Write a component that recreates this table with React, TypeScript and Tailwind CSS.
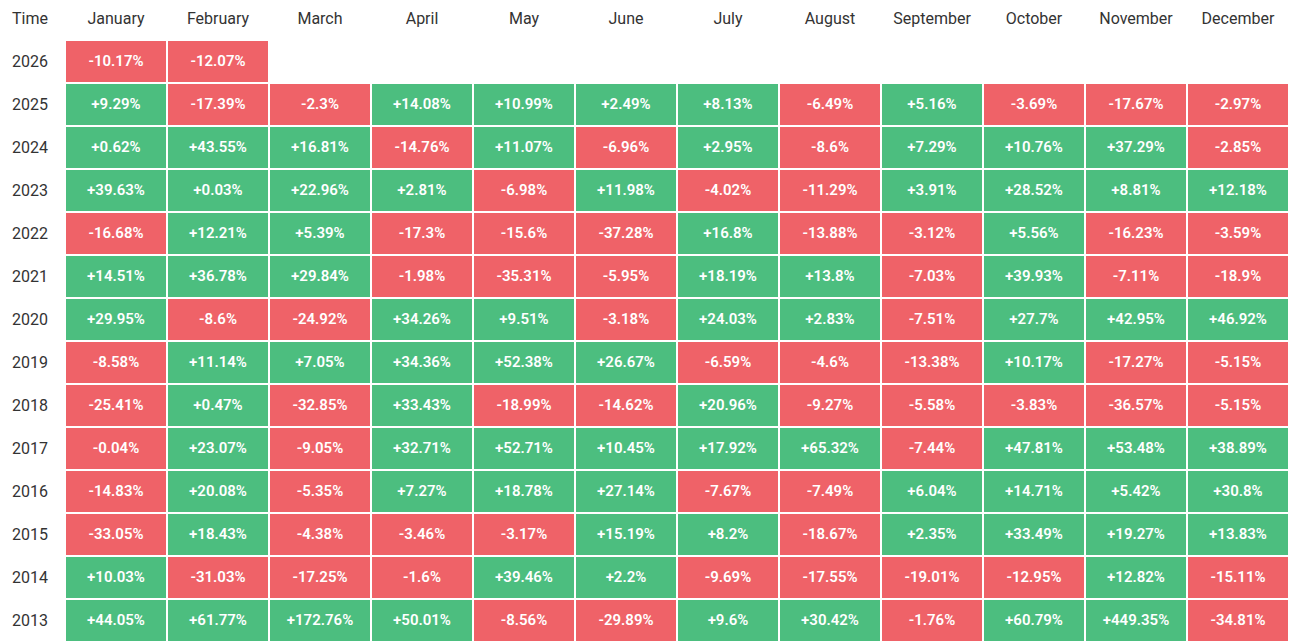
const MONTHS = [
  "January",
  "February",
  "March",
  "April",
  "May",
  "June",
  "July",
  "August",
  "September",
  "October",
  "November",
  "December",
];

const ROWS: [string, string][] = [
  ["2026", "-10.17 -12.07"],
  ["2025", "+9.29 -17.39 -2.3 +14.08 +10.99 +2.49 +8.13 -6.49 +5.16 -3.69 -17.67 -2.97"],
  ["2024", "+0.62 +43.55 +16.81 -14.76 +11.07 -6.96 +2.95 -8.6 +7.29 +10.76 +37.29 -2.85"],
  ["2023", "+39.63 +0.03 +22.96 +2.81 -6.98 +11.98 -4.02 -11.29 +3.91 +28.52 +8.81 +12.18"],
  ["2022", "-16.68 +12.21 +5.39 -17.3 -15.6 -37.28 +16.8 -13.88 -3.12 +5.56 -16.23 -3.59"],
  ["2021", "+14.51 +36.78 +29.84 -1.98 -35.31 -5.95 +18.19 +13.8 -7.03 +39.93 -7.11 -18.9"],
  ["2020", "+29.95 -8.6 -24.92 +34.26 +9.51 -3.18 +24.03 +2.83 -7.51 +27.7 +42.95 +46.92"],
  ["2019", "-8.58 +11.14 +7.05 +34.36 +52.38 +26.67 -6.59 -4.6 -13.38 +10.17 -17.27 -5.15"],
  ["2018", "-25.41 +0.47 -32.85 +33.43 -18.99 -14.62 +20.96 -9.27 -5.58 -3.83 -36.57 -5.15"],
  ["2017", "-0.04 +23.07 -9.05 +32.71 +52.71 +10.45 +17.92 +65.32 -7.44 +47.81 +53.48 +38.89"],
  ["2016", "-14.83 +20.08 -5.35 +7.27 +18.78 +27.14 -7.67 -7.49 +6.04 +14.71 +5.42 +30.8"],
  ["2015", "-33.05 +18.43 -4.38 -3.46 -3.17 +15.19 +8.2 -18.67 +2.35 +33.49 +19.27 +13.83"],
  ["2014", "+10.03 -31.03 -17.25 -1.6 +39.46 +2.2 -9.69 -17.55 -19.01 -12.95 +12.82 -15.11"],
  ["2013", "+44.05 +61.77 +172.76 +50.01 -8.56 -29.89 +9.6 +30.42 -1.76 +60.79 +449.35 -34.81"],
];

function Cell({ value }: { value?: string }) {
  if (!value) return <div className="h-[41px]" />;
  const up = value.startsWith("+");
  return (
    <div
      className={[
        "flex h-[41px] items-center justify-center text-[15px] font-semibold text-white",
        up ? "bg-[#4cbe7f]" : "bg-[#ef6268]",
      ].join(" ")}
    >
      {value}%
    </div>
  );
}

export default function App() {
  return (
    <div
      className="h-[641px] w-[1297px] overflow-hidden bg-white"
      style={{ fontFamily: "Roboto, 'Noto Sans', sans-serif" }}
    >
      <div className="grid grid-cols-[64px_repeat(12,100px)] gap-x-[2px] gap-y-[2px]">
        <div className="flex h-[39px] items-start pl-[12px] pt-[7px] text-[16px] text-[#333]">Time</div>
        {MONTHS.map((m) => (
          <div key={m} className="flex h-[39px] justify-center pt-[7px] text-[16px] text-[#333]">
            {m}
          </div>
        ))}
        {ROWS.map(([year, data]) => {
          const vals = data.split(" ");
          return [
            <div key={year} className="flex h-[41px] items-center pl-[12px] text-[16px] text-[#333]">
              {year}
            </div>,
            ...MONTHS.map((m, i) => <Cell key={year + m} value={vals[i]} />),
          ];
        })}
      </div>
    </div>
  );
}
